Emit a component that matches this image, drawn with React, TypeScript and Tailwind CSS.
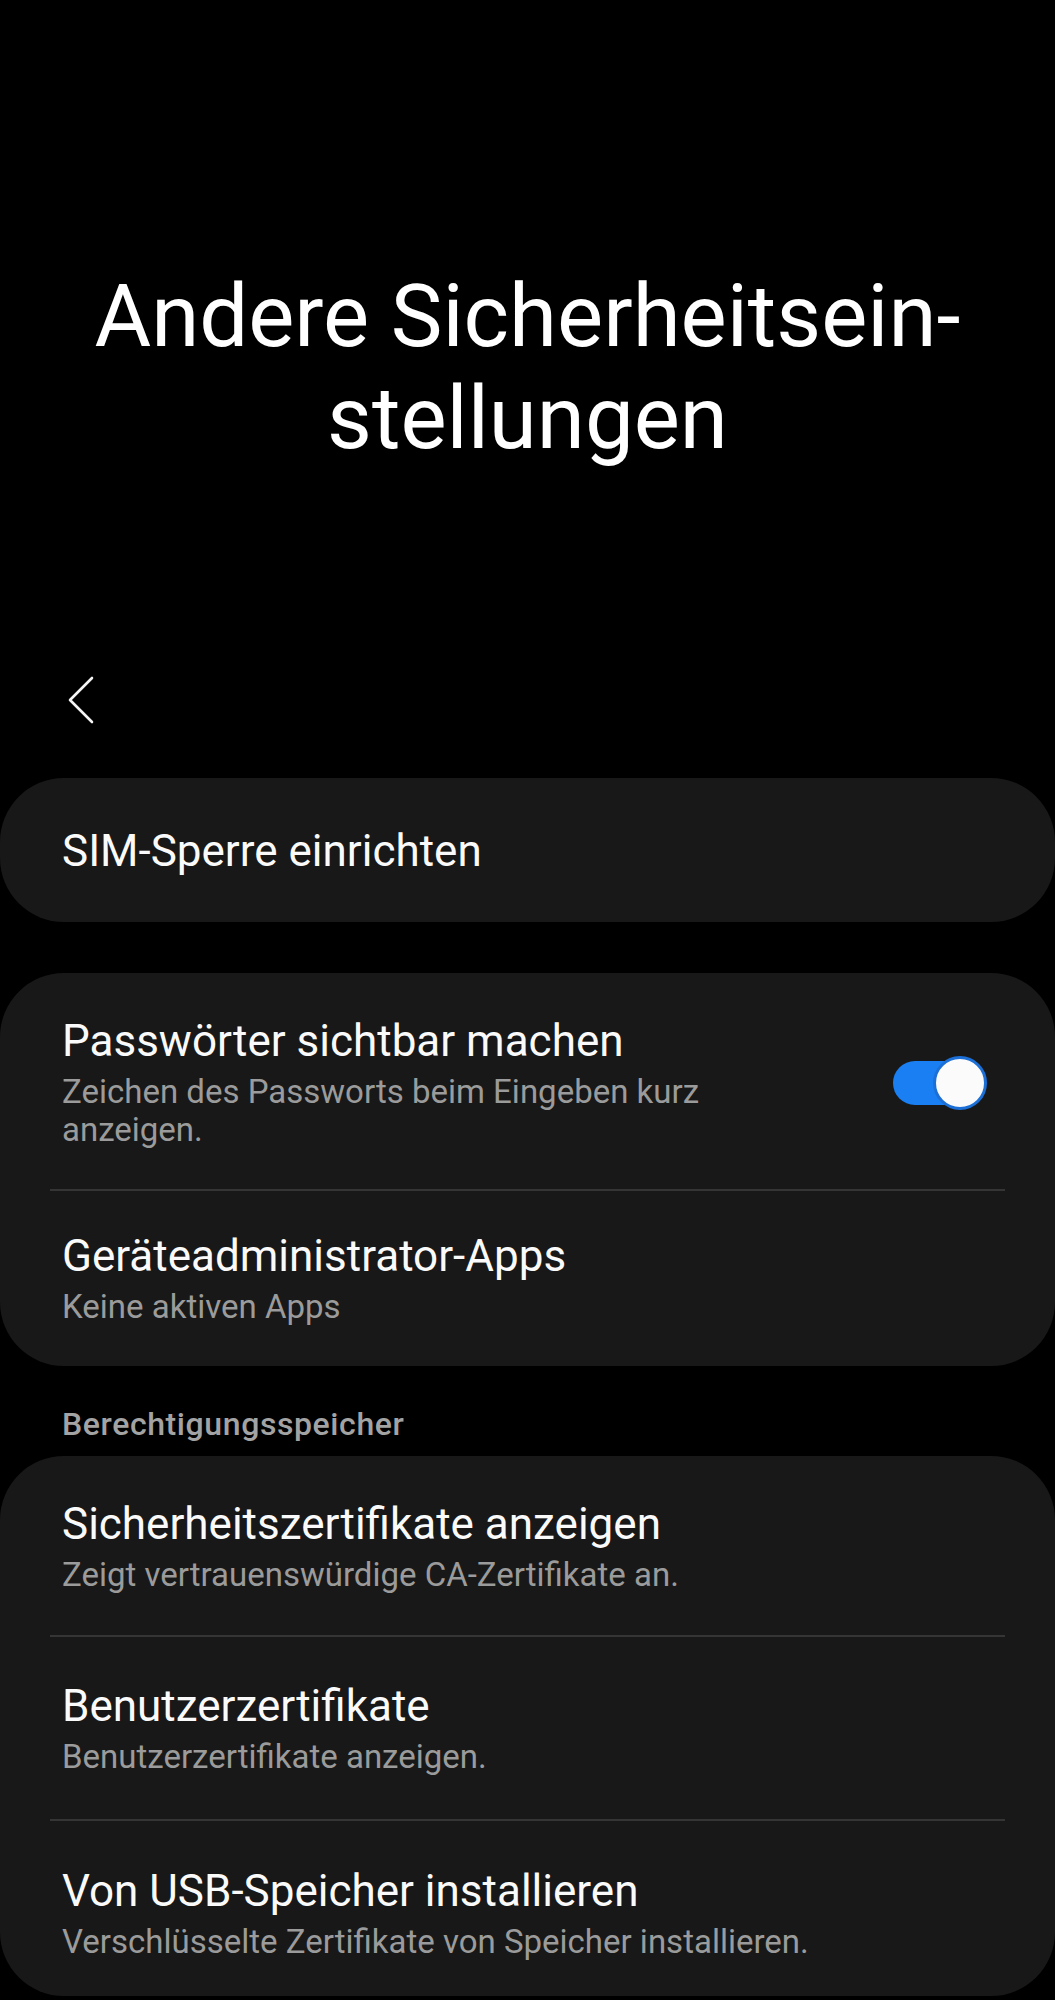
import React from "react";

const font = { fontFamily: "Roboto, 'Noto Sans', sans-serif" };

function Item({ title, sub, divider, toggle, pt = "pt-[46px]", pb = "pb-[40px]" }: { title: string; sub?: string; divider?: boolean; toggle?: boolean; pt?: string; pb?: string }) {
  return (
    <div>
      <div className={`flex items-center pl-[62px] pr-[68px] ${pt} ${pb}`}>
        <div className="flex-1 min-w-0">
          <div className="text-[44px] leading-[48px] text-[#fafafa]">{title}</div>
          {sub && (
            <div className={`mt-[8px] text-[33px] leading-[38px] text-[#9b9b9b] ${toggle ? "max-w-[700px]" : ""}`}>{sub}</div>
          )}
        </div>
        {toggle && (
          <div className="relative w-[94px] h-[54px] shrink-0 ml-4">
            <div className="absolute left-0 top-[5px] w-[84px] h-[44px] rounded-full bg-[#1a7ff2]" />
            <div className="absolute right-0 top-0 w-[54px] h-[54px] rounded-full bg-[#fbfbfb] border-[3px] border-[#1c6fd6]" />
          </div>
        )}
      </div>
      {divider && <div className="mx-[50px] h-[2px] bg-[#353535]" />}
    </div>
  );
}

export default function App() {
  return (
    <div className="w-[1055px] h-[2000px] bg-black overflow-hidden" style={font}>
      <div className="pt-[265px] text-center text-white text-[87px] leading-[102px]">
        Andere Sicherheitsein-
        <br />
        stellungen
      </div>
      <div className="mt-[207px] pl-[67px] h-[46px]">
        <svg width="27" height="48" viewBox="0 0 27 48" fill="none">
          <polyline points="25,2 3,24 25,46" stroke="#f5f5f5" strokeWidth="2.6" strokeLinecap="round" strokeLinejoin="round" />
        </svg>
      </div>
      <div className="mt-[56px] bg-[#181818] rounded-[64px]">
        <Item title="SIM-Sperre einrichten" pt="pt-[49px]" pb="pb-[47px]" />
      </div>
      <div className="mt-[51px] bg-[#181818] rounded-[64px]">
        <Item title="Passwörter sichtbar machen" sub="Zeichen des Passworts beim Eingeben kurz anzeigen." toggle divider pt="pt-[44px]" pb="pb-[40px]" />
        <Item title="Geräteadministrator-Apps" sub="Keine aktiven Apps" pt="pt-[41px]" pb="pb-[40px]" />
      </div>
      <div className="mt-[40px] pl-[62px] text-[32px] leading-[36px] font-medium tracking-[0.6px] text-[#a3a3a3]">Berechtigungsspeicher</div>
      <div className="mt-[14px] bg-[#181818] rounded-[64px]">
        <Item title="Sicherheitszertifikate anzeigen" sub="Zeigt vertrauenswürdige CA-Zertifikate an." divider pt="pt-[44px]" pb="pb-[41px]" />
        <Item title="Benutzerzertifikate" sub="Benutzerzertifikate anzeigen." divider pt="pt-[45px]" pb="pb-[43px]" />
        <Item title="Von USB-Speicher installieren" sub="Verschlüsselte Zertifikate von Speicher installieren." pt="pt-[46px]" pb="pb-[35px]" />
      </div>
    </div>
  );
}
